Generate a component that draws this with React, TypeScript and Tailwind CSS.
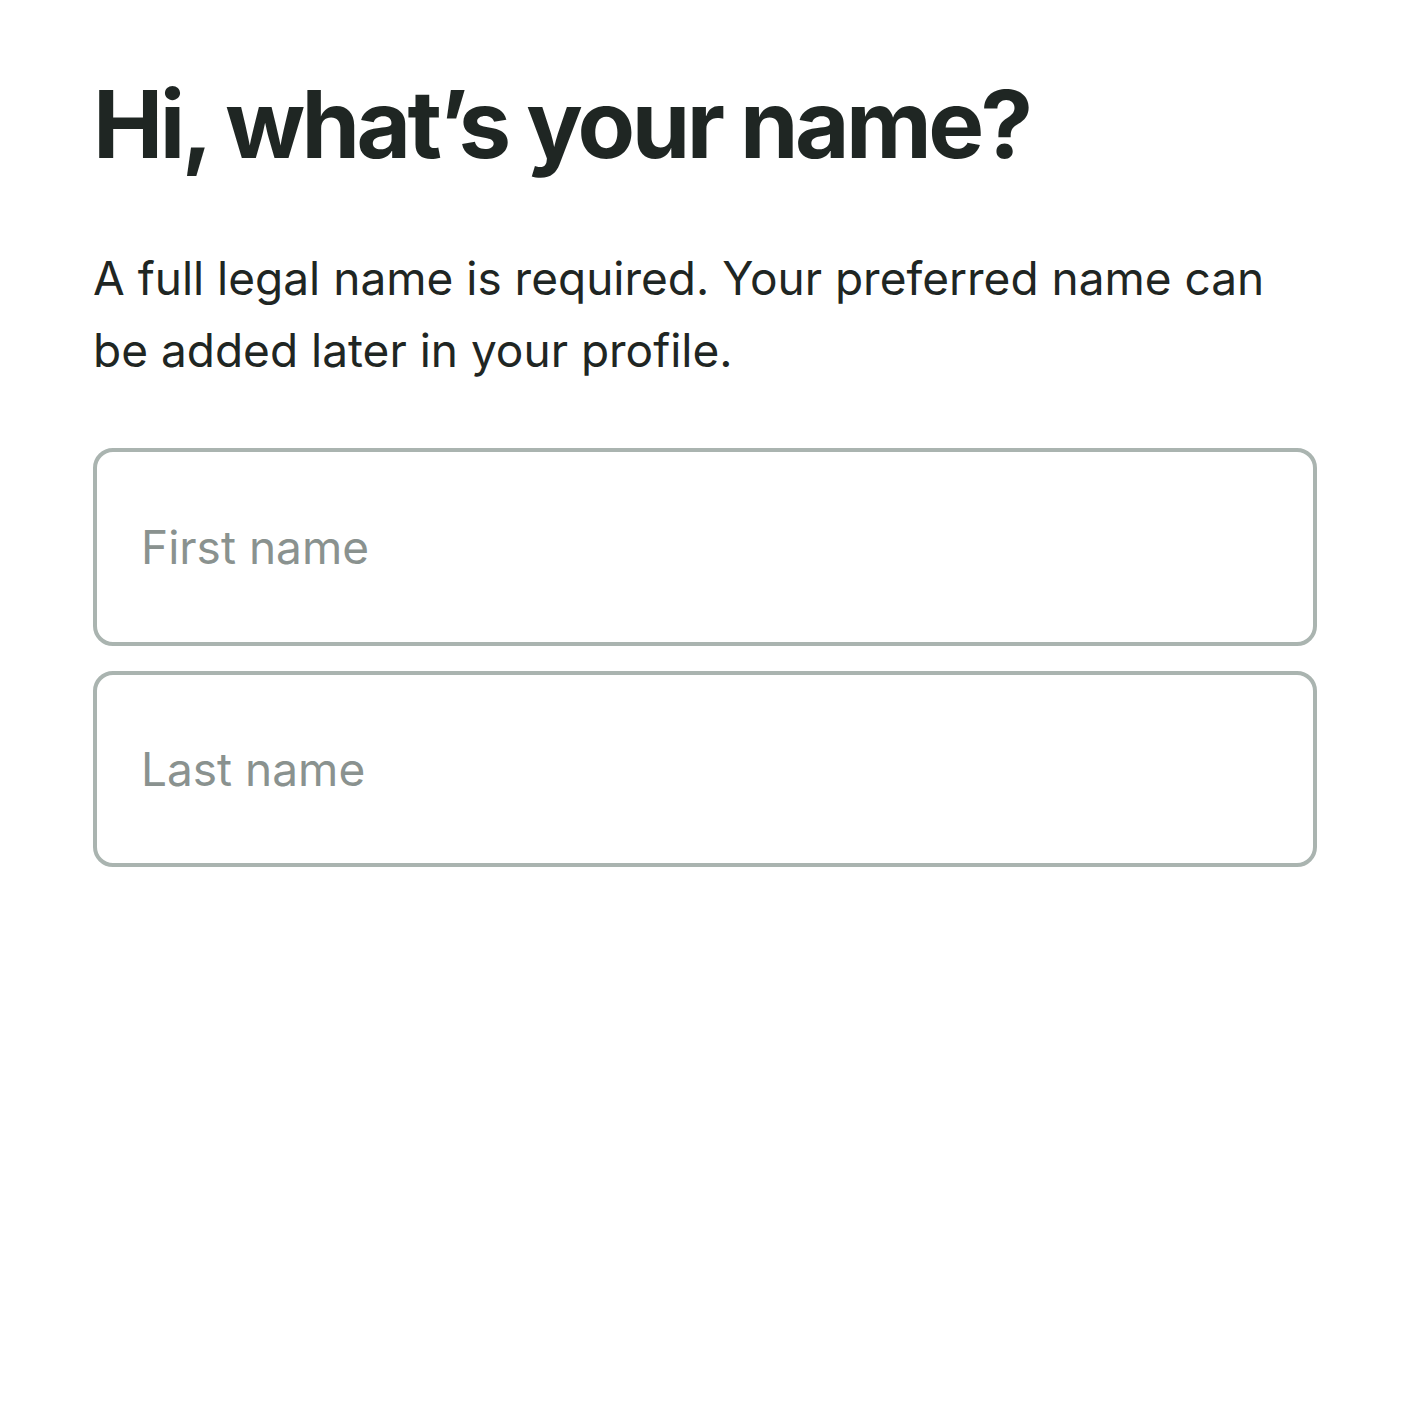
export default function App() {
  return (
    <div className="min-h-[1404px] w-full bg-white" style={{ fontFamily: "Inter, 'Liberation Sans', sans-serif" }}>
      <div className="pl-[93px] pt-[70px] w-[1317px]">
        <h1 className="text-[94px] leading-[108px] font-bold tracking-[-0.038em] text-[#1f2623]">
          Hi, what’s your name?
        </h1>
        <p className="mt-[64px] max-w-[1200px] text-[46px] leading-[72px] text-[#1f2623]">
          A full legal name is required. Your preferred name can be added later in your profile.
        </p>

        <div className="mt-[62px] flex flex-col gap-[25px]">
          <input
            type="text"
            placeholder="First name"
            className="h-[198px] w-full rounded-[20px] border-4 border-[#aab4b0] px-[44px] text-[46px] text-[#1f2623] placeholder:text-[#8a928f] outline-none"
          />
          <input
            type="text"
            placeholder="Last name"
            className="h-[196px] w-full rounded-[20px] border-4 border-[#aab4b0] px-[44px] text-[46px] text-[#1f2623] placeholder:text-[#8a928f] outline-none"
          />
        </div>
      </div>
    </div>
  );
}
